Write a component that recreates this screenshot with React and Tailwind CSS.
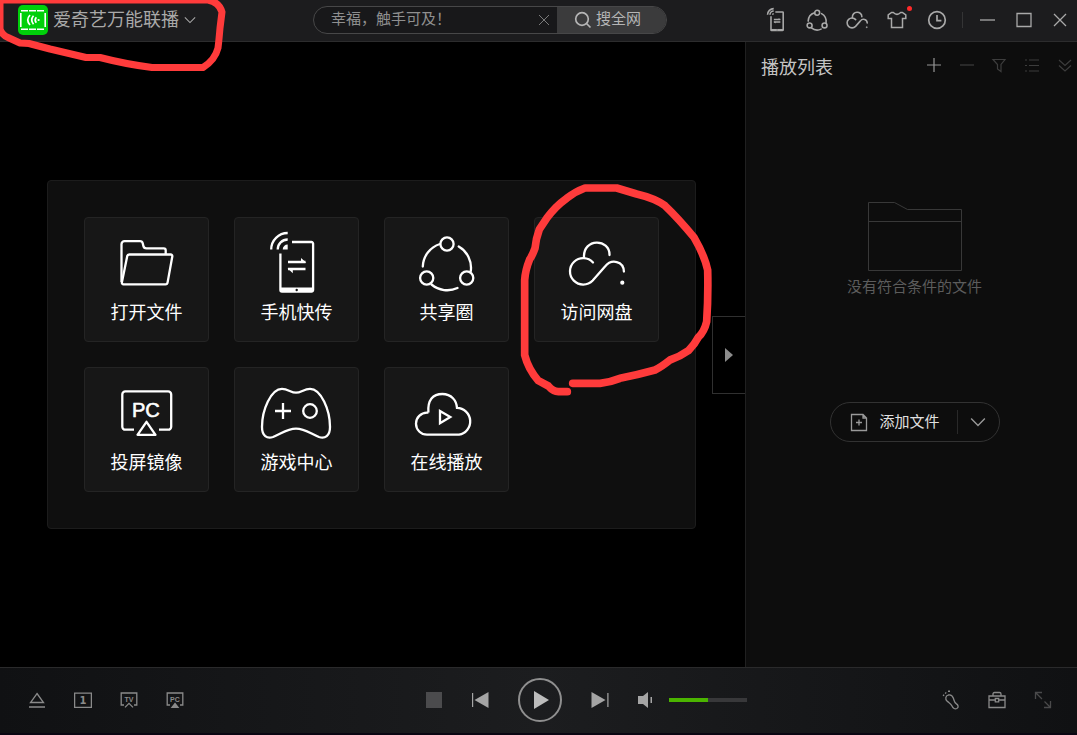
import React, { useState } from 'react';

const ShareIcon = ({ className, strokeWidth = 2.3 }) => (
  <svg viewBox="0 0 75 75" className={className} fill="none" stroke="currentColor" strokeWidth={strokeWidth} strokeLinecap="round">
    <circle cx="38" cy="18" r="6.6" />
    <circle cx="17.7" cy="52" r="6.6" />
    <circle cx="57.7" cy="52" r="6.6" />
    <path d="M13.8 40.5A24.5 24.5 0 0 1 31 18" />
    <path d="M49.7 20.5A24.5 24.5 0 0 1 61.8 45" />
    <path d="M22.5 58.5A24.5 24.5 0 0 0 48.5 62" />
  </svg>
);

const CloudDriveIcon = ({ className, strokeWidth = 2.3 }) => (
  <svg viewBox="0 0 75 75" className={className} fill="none" stroke="currentColor" strokeWidth={strokeWidth} strokeLinecap="round">
    <path d="M25 31.5C24 11.5 51 12.5 50.5 29" />
    <path d="M34 36.5A13.2 13.2 0 1 0 33.7 54.5L46 40.5C52.5 32.5 64.5 35 64.9 45.5" />
    <circle cx="63.3" cy="56.7" r="1.4" fill="currentColor" stroke="currentColor" strokeWidth="1.4" />
  </svg>
);

const PhoneIcon = ({ className, strokeWidth = 2.3 }) => (
  <svg viewBox="0 0 75 75" className={className} fill="none" stroke="currentColor" strokeWidth={strokeWidth}>
    <path d="M33 16H52.5a1.6 1.6 0 0 1 1.6 1.6V64a1.6 1.6 0 0 1-1.6 1.6H23a1.6 1.6 0 0 1-1.6-1.6V27.5" />
    <path d="M21 61.5H54V66H21z" fill="currentColor" stroke="none" />
    <circle cx="37.7" cy="64" r="1.2" fill="#171717" stroke="none" />
    <path d="M12.2 23.5A16.5 16.5 0 0 1 28.7 7" />
    <path d="M18.7 23.5A10 10 0 0 1 28.7 13.5" />
    <path d="M23.7 23.5A5 5 0 0 1 28.7 18.5V23.5z" fill="currentColor" stroke="none" />
    <path d="M29 36H46.5M29 43H46.5" />
    <path d="M42 32L47.3 36.8H42zM33.8 47.2L28.5 42.2H33.8z" fill="currentColor" stroke="none" />
  </svg>
);

const FolderIcon = ({ className }) => (
  <svg viewBox="0 0 75 75" className={className} fill="none" stroke="currentColor" strokeWidth="2.3" strokeLinejoin="round">
    <path d="M56.7 28V24.3a2 2 0 0 0-2-2H37.5c-2 0-2.9-.9-3.2-2.6l-.5-2.2c-.4-1.6-1.2-2.3-2.8-2.3H15.5a3 3 0 0 0-3 3V56" />
    <path d="M20.3 28.5H61.6a1.7 1.7 0 0 1 1.7 2L58.6 56.4a2.2 2.2 0 0 1-2.2 1.9H14.5a1.6 1.6 0 0 1-1.6-1.9L18.2 30.2a2.1 2.1 0 0 1 2.1-1.7z" />
  </svg>
);

const ScreenIcon = ({ className }) => (
  <svg viewBox="0 0 75 75" className={className} fill="none" stroke="currentColor" strokeWidth="2.3" strokeLinejoin="round">
    <path d="M25 53.7H16.3a3 3 0 0 1-3-3V18.4a3 3 0 0 1 3-3H59.2a3 3 0 0 1 3 3V50.7a3 3 0 0 1-3 3H50" />
    <path d="M37.5 45.8L46.5 58.8H28.5z" />
    <text x="23" y="41" fontSize="20" fontFamily="Liberation Sans, Arial, sans-serif" fill="currentColor" stroke="currentColor" strokeWidth="0.6">PC</text>
  </svg>
);

const GamepadIcon = ({ className }) => (
  <svg viewBox="0 0 75 75" className={className} fill="none" stroke="currentColor" strokeWidth="2.3">
    <path d="M37 16.7C42 16.7 45 12.9 51 12.9C62 12.9 71 34 71 51C71 60 66 63 60 61C52 58 46 52.7 37 52.7C28 52.7 22 58 14 61C8 63 3 60 3 51C3 34 12 12.9 23 12.9C29 12.9 32 16.7 37 16.7Z" />
    <path d="M24 27V43M16 35H32" />
    <circle cx="51" cy="35" r="6.8" />
  </svg>
);

const CloudPlayIcon = ({ className }) => (
  <svg viewBox="0 0 75 75" className={className} fill="none" stroke="currentColor" strokeWidth="2.3">
    <path d="M19.4 36.7C18.4 24 24 18 33.3 18S47.5 24.5 48 31.9A13.5 13.5 0 0 1 50 58.7H18A11 11 0 0 1 18 36.7H19.4" />
    <path d="M31 35V47.2L41.3 41.1z" />
  </svg>
);

const ShirtIcon = () => (
  <svg viewBox="0 0 20 20" className="size-5" fill="none" stroke="currentColor" strokeWidth="1.5">
    <path d="M6.3 2.5Q10 6.2 13.7 2.5H15.4L18.8 5V8.6H15.5V17.5H4.5V8.6H1.2V5L4.6 2.5z" />
  </svg>
);

const ClockIcon = () => (
  <svg viewBox="0 0 20 20" className="size-5" fill="none" stroke="currentColor" strokeWidth="1.7">
    <circle cx="10" cy="10" r="8.3" />
    <path d="M10 5V10.6H14.4" />
  </svg>
);

const ChevronDown = ({ className }) => (
  <svg viewBox="0 0 14 14" className={className} fill="none" stroke="currentColor" strokeWidth="1.2">
    <path d="M1 4L7 10L13 4" />
  </svg>
);

const Logo = () => (
  <svg viewBox="0 0 30 30" className="size-[30px]" fill="none">
    <rect x="0" y="0" width="30" height="30" rx="5" fill="#00d00a" />
    <path d="M3 5.7H27" stroke="#fff" strokeWidth="1.4" strokeDasharray="7 1" />
    <path d="M3 24.3H27" stroke="#fff" strokeWidth="1.4" strokeDasharray="7 1" />
    <path d="M2.8 8V22M27.2 8V22" stroke="#fff" strokeWidth="1.6" />
    <path d="M12 10Q7.5 15 12 20M15.5 10.8Q12 15 15.5 19.2M18.3 12.2Q16 15 18.3 17.8" stroke="#fff" strokeWidth="1.7" />
    <circle cx="20.6" cy="15" r="1.1" fill="#fff" />
  </svg>
);

const tiles = [
  { name: '打开文件', Icon: FolderIcon },
  { name: '手机快传', Icon: PhoneIcon },
  { name: '共享圈', Icon: ShareIcon },
  { name: '访问网盘', Icon: CloudDriveIcon, marked: true },
  { name: '投屏镜像', Icon: ScreenIcon },
  { name: '游戏中心', Icon: GamepadIcon },
  { name: '在线播放', Icon: CloudPlayIcon },
];

const headerTools = [
  { name: '手机快传', icon: <PhoneIcon className="size-7" strokeWidth={4.2} /> },
  { name: '共享圈', icon: <ShareIcon className="size-7" strokeWidth={4.2} /> },
  { name: '网盘', icon: <CloudDriveIcon className="size-7" strokeWidth={4.2} /> },
  { name: '皮肤', icon: <ShirtIcon />, dot: true },
  { name: '历史', icon: <ClockIcon /> },
];

const windowTools = [
  { name: '最小化', path: 'M2 9H17' },
  { name: '最大化', path: 'M3 2.5H17V15.5H3z' },
  { name: '关闭', path: 'M4 3L16 15M16 3L4 15' },
];

const listTools = [
  { name: '添加', path: 'M10 2V16M3 9H17', active: true },
  { name: '删除', path: 'M3 9H17' },
  { name: '筛选', path: 'M3 3.5H15L11 8.5V15.5L7.5 13V8.5z' },
  { name: '列表', path: 'M2 4H4M6 4H16M2 9.5H4M6 9.5H16M2 15H4M6 15H16' },
  { name: '展开', path: 'M3 4L9 9.5L15 4M3 9.5L9 15L15 9.5' },
];

const TitleBar = () => {
  const [query, setQuery] = useState('幸福，触手可及！');

  return (
    <header className="relative flex h-[42px] shrink-0 items-center border-b border-[#2c2c2d] bg-[#1c1c1e] pb-0.5 text-[#a9a9a9]">
      <div className="w-[313px] shrink-0 pl-[18px]">
        <button type="button" className="flex items-center gap-[5px]">
          <Logo />
          <span className="text-[18px] leading-6">爱奇艺万能联播</span>
          <ChevronDown className="size-3" />
        </button>
      </div>

      <form className="flex h-7 w-[354px] shrink-0 overflow-hidden rounded-full border border-[#474748] bg-[#18181a]" onSubmit={(e) => e.preventDefault()}>
        <input
          type="text"
          aria-label="搜索"
          value={query}
          onChange={(e) => setQuery(e.target.value)}
          className="min-w-0 flex-1 bg-transparent pl-[17px] text-[15px] text-[#8f8f8f] outline-none"
        />
        <button type="button" aria-label="清除" onClick={() => setQuery('')} className="flex w-[26px] items-center justify-center text-[#7a7a7a]">
          <svg viewBox="0 0 12 12" className="size-3" fill="none" stroke="currentColor">
            <path d="M1 1L11 11M11 1L1 11" />
          </svg>
        </button>
        <button type="submit" className="flex w-[109px] items-center gap-1 bg-[#3b3b3c] pl-[17px] text-[15px] text-[#b5b5b5]">
          <svg viewBox="0 0 18 18" className="size-[18px]" fill="none" stroke="currentColor" strokeWidth="1.7">
            <circle cx="8" cy="8" r="6.3" />
            <path d="M12.5 12.5L16.5 16.5" />
          </svg>
          搜全网
        </button>
      </form>

      <div className="ml-auto flex shrink-0 items-center">
        {headerTools.map(tool => (
          <button key={tool.name} type="button" aria-label={tool.name} className="relative flex h-9 w-10 items-center justify-center">
            {tool.icon}
            {tool.dot && <span className="absolute top-1 right-[5px] size-[5px] rounded-full bg-[#ff2a2a]" />}
          </button>
        ))}
        <span className="mr-[6px] ml-[5px] h-4 w-px bg-[#343435]" />
        {windowTools.map(tool => (
          <button key={tool.name} type="button" aria-label={tool.name} className="flex h-9 w-9 items-center justify-center">
            <svg viewBox="0 0 18 18" className="size-[18px]" fill="none" stroke="currentColor" strokeWidth="1.3">
              <path d={tool.path} />
            </svg>
          </button>
        ))}
      </div>

      {/* marker stroke round the product name */}
      <svg viewBox="0 0 230 76" className="pointer-events-none absolute top-0 left-0 z-20 h-[76px] w-[230px]" fill="none" stroke="#ff3b3b" strokeWidth="7" strokeLinejoin="round" strokeLinecap="round">
        <path d="M0 0V29Q2 35 8 37.5L20 43L29 43.5L50 49L86 57.5H100Q125 64 152 67.5H203Q215 60 218 48Q219 40 220 28L222 12Q219 2 208 0H0" />
      </svg>
    </header>
  );
};

const Launcher = () => (
  <section className="relative flex min-w-0 flex-1 items-center justify-center bg-black pr-0.5">
    <ul className="grid grid-cols-[repeat(4,125px)] gap-[25px] rounded-[4px] border border-[#1c1c1c] bg-[#0f0f0f] p-9">
      {tiles.map(({ name, Icon, marked }) => (
        <li key={name} className="relative">
          <button type="button" className="flex size-[125px] flex-col items-center rounded-[4px] border border-[#242424] bg-[#171717] pt-2 text-white">
            <Icon className="size-[75px] shrink-0" />
            <span className="text-[18px] leading-6">{name}</span>
          </button>
          {marked && (
            <svg viewBox="450 30 600 660" className="pointer-events-none absolute top-[-37px] left-[-14px] z-20 h-[220px] w-[200px]" fill="none" stroke="#ff3b3b" strokeWidth="23" strokeLinejoin="round" strokeLinecap="round">
              <path d="M608 640H690Q720 637 750 625Q800 615 855 600Q875 590 900 570Q930 560 955 542Q975 522 985 502Q1003 485 1010 455Q1015 380 1013 300Q1003 255 972 202Q925 145 885 107Q855 85 800 72L740 54H645Q615 65 590 85Q555 110 530 145L508 178Q498 205 495 235Q488 255 479 268Q466 300 464 330V555Q475 598 505 632L535 648Q550 665 565 665H592" />
            </svg>
          )}
        </li>
      ))}
    </ul>
    <button type="button" aria-label="收起播放列表" className="absolute top-1/2 right-0 flex h-[78px] w-[33px] -translate-y-1/2 items-center justify-center border border-r-0 border-[#303030] bg-black text-[#8c8c8c]">
      <svg viewBox="0 0 8 14" className="h-[14px] w-2" fill="currentColor">
        <path d="M0 0L8 7L0 14z" />
      </svg>
    </button>
  </section>
);

const Playlist = () => (
  <aside className="w-[332px] shrink-0 border-l border-[#202020] bg-[#0d0d0d]">
    <div className="flex h-[50px] items-center justify-between pl-[15px]">
      <h2 className="pt-0.5 text-[18px] leading-6 text-[#c4c4c4]">播放列表</h2>
      <div className="flex gap-[9px] pb-1">
        {listTools.map(tool => (
          <button key={tool.name} type="button" aria-label={tool.name} className={tool.active ? 'flex size-6 items-center justify-center text-[#969696]' : 'flex size-6 items-center justify-center text-[#3d3d3d]'}>
            <svg viewBox="0 0 18 18" className="size-[18px]" fill="none" stroke="currentColor" strokeWidth="1.2">
              <path d={tool.path} />
            </svg>
          </button>
        ))}
      </div>
    </div>

    <div className="flex flex-col items-center pt-[110px] pl-[6px]">
      <svg viewBox="0 0 94 69" className="h-[69px] w-[94px]" fill="none" stroke="#383838" strokeWidth="1">
        <path d="M.5 .5H26.5L39.5 7.5H93.5V68.5H.5zM.5 19.5H93.5" />
      </svg>
      <p className="mt-1 text-[15px] leading-6 text-[#5c5c5c]">没有符合条件的文件</p>

      <div className="mt-[103px] flex h-10 w-[170px] items-center rounded-full border border-[#323232] text-[#999]">
        <button type="button" className="flex flex-1 items-center gap-3 pl-[19px] text-[15px] text-[#e0e0e0]">
          <svg viewBox="0 0 18 20" className="h-5 w-[18px] text-[#999]" fill="none" stroke="currentColor" strokeWidth="1.3">
            <path d="M1.5 2.5H13L16.5 6V18.5H1.5zM13 2.5V6H16.5M9 7.5V13.5M6 10.5H12" />
          </svg>
          添加文件
        </button>
        <button type="button" aria-label="更多添加方式" className="flex h-6 w-[42px] items-center justify-center border-l border-[#292929]">
          <ChevronDown className="size-4" />
        </button>
      </div>
    </div>
  </aside>
);

const barButton = 'flex h-11 w-[46px] shrink-0 items-center justify-center';

const PlayerBar = () => {
  const [volume, setVolume] = useState(50);

  return (
    <footer className="grid h-[68px] shrink-0 grid-cols-[1fr_auto_1fr] items-center border-t border-b-2 border-t-[#2a2a2b] border-b-[#0a0612] bg-linear-to-r from-[#101113] via-[#1c1d1f] to-[#101113] pr-[11px] pb-0.5 pl-[14px] text-[#8a8a8a]">
      <div className="flex items-center">
        <button type="button" aria-label="打开" className={barButton}>
          <svg viewBox="0 0 18 18" className="size-[18px]" fill="none" stroke="currentColor" strokeWidth="1.3">
            <path d="M9 2.5L15.5 11.5H2.5zM1 16H17" />
          </svg>
        </button>
        <button type="button" aria-label="单曲播放" className={barButton}>
          <svg viewBox="0 0 18 18" className="size-[18px]" fill="none" stroke="currentColor" strokeWidth="1.3">
            <path d="M.6 2.1H17.4V16.4H.6z" />
            <text x="5.5" y="13" fontSize="10" fontWeight="bold" fontFamily="DejaVu Sans, sans-serif" fill="currentColor" stroke="none">1</text>
          </svg>
        </button>
        <button type="button" aria-label="投屏到电视" className={barButton}>
          <svg viewBox="0 0 18 18" className="size-[18px]" fill="none" stroke="currentColor" strokeWidth="1.3">
            <path d="M4 14H1.2V2H16.8V14H14M5 16.4L9 12.4L13 16.4" />
            <text x="4.5" y="10.5" fontSize="7" fontWeight="bold" fontFamily="Liberation Sans, Arial, sans-serif" fill="currentColor" stroke="none">TV</text>
          </svg>
        </button>
        <button type="button" aria-label="投屏到电脑" className={barButton}>
          <svg viewBox="0 0 18 18" className="size-[18px]" fill="none" stroke="currentColor" strokeWidth="1.3">
            <path d="M4 14H1.2V2H16.8V14H14" />
            <path d="M9 12.5L12 16.3H6z" fill="currentColor" />
            <text x="4" y="10.5" fontSize="7" fontWeight="bold" fontFamily="Liberation Sans, Arial, sans-serif" fill="currentColor" stroke="none">PC</text>
          </svg>
        </button>
        <button type="button" aria-label="停止" className={`${barButton} ml-auto`}>
          <span className="size-4 bg-[#4b4b4d]" />
        </button>
        <button type="button" aria-label="上一个" className={`${barButton} mr-[15px] text-[#a5a5a5]`}>
          <svg viewBox="0 0 18 18" className="size-[18px]" fill="currentColor">
            <path d="M1 2H2.2V16H1zM17.5 1V17L3.5 9z" />
          </svg>
        </button>
      </div>

      <button type="button" aria-label="播放" className="flex size-11 items-center justify-center rounded-full border-2 border-[#8f8f8f] text-[#bdbdbd]">
        <svg viewBox="0 0 16 18" className="ml-[3px] h-[18px] w-4" fill="currentColor">
          <path d="M0 0L15 9L0 18z" />
        </svg>
      </button>

      <div className="flex items-center">
        <button type="button" aria-label="下一个" className={`${barButton} ml-[15px] text-[#a5a5a5]`}>
          <svg viewBox="0 0 18 18" className="size-[18px]" fill="currentColor">
            <path d="M16.3 2H17.5V16H16.3zM.5 1V17L14.5 9z" />
          </svg>
        </button>
        <button type="button" aria-label="静音" className={`${barButton} text-[#a5a5a5]`}>
          <svg viewBox="0 0 18 18" className="size-[18px]" fill="currentColor">
            <path d="M1 5H6L11 1V17L6 13H1zM13.5 6H15V12H13.5z" />
          </svg>
        </button>
        <input
          type="range"
          aria-label="音量"
          min="0"
          max="100"
          value={volume}
          onChange={(e) => setVolume(Number(e.target.value))}
          className="h-1 w-[78px] appearance-none [&::-webkit-slider-thumb]:size-0 [&::-webkit-slider-thumb]:appearance-none"
          style={{ background: `linear-gradient(to right, #4bb400 ${volume}%, #38383a ${volume}%)` }}
        />
        <button type="button" aria-label="快捷操作" className={`${barButton} ml-auto`}>
          <svg viewBox="0 0 18 20" className="h-5 w-[18px]" fill="none" stroke="currentColor" strokeWidth="1.3">
            <path d="M6.3 5C3.5 5.8 3 9 5 11C7 12.8 9 13.5 10 16C11 18.6 13 19.3 14.8 18.5C17 17.3 16.3 15 14.2 13.6C12 12 12.3 10.8 11.4 8.3C10.5 5.8 9 4.3 6.3 5z" />
            <path d="M6 1.2H8M3.2 2.6L4.2 3.4M1 5L2.2 5.6" strokeWidth="1.6" />
          </svg>
        </button>
        <button type="button" aria-label="工具箱" className={barButton}>
          <svg viewBox="0 0 18 18" className="size-[18px]" fill="none" stroke="currentColor" strokeWidth="1.3">
            <path d="M1 5H17V16.5H1zM5 5V3Q5 1.5 6.5 1.5H11.5Q13 1.5 13 3V5M1 9H7.3M10.7 9H17M7.3 7.5H10.7V10.8H7.3z" />
          </svg>
        </button>
        <button type="button" aria-label="全屏" className={`${barButton} text-[#4a4a4b]`}>
          <svg viewBox="0 0 18 18" className="size-[18px]" fill="none" stroke="currentColor" strokeWidth="1.3">
            <path d="M1.5 8V1.5H8M1.5 1.5L8 8M10.5 10.5L16.5 16.5M16.5 10V16.5H10" />
          </svg>
        </button>
      </div>
    </footer>
  );
};

const App = () => {
  return (
    <div className="flex min-h-screen flex-col bg-black font-['Liberation_Sans','Noto_Sans_CJK_SC',sans-serif]">
      <TitleBar />
      <main className="flex flex-1">
        <Launcher />
        <Playlist />
      </main>
      <PlayerBar />
    </div>
  );
};

export default App;
